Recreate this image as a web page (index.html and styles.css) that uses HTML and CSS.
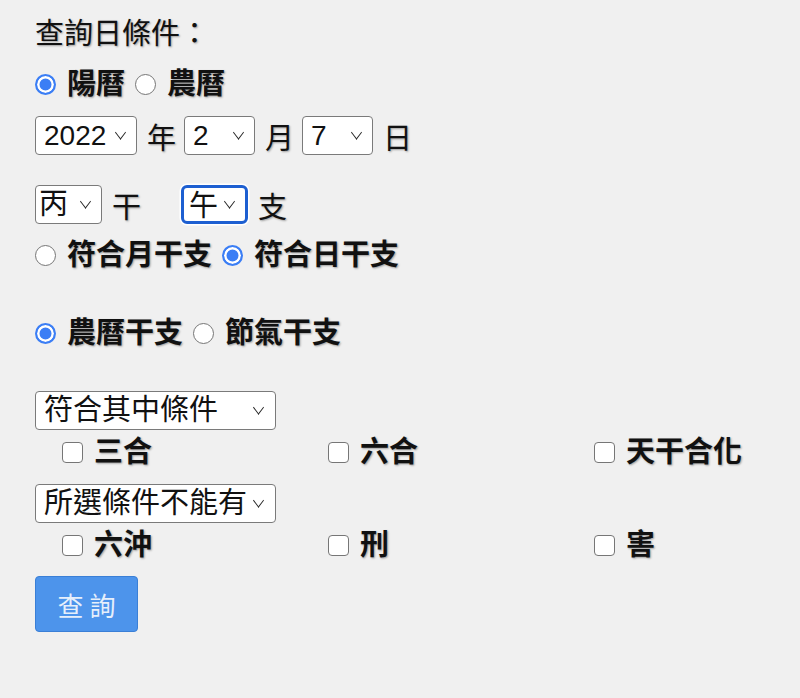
FILE: index.html
```html
<!DOCTYPE html>
<html lang="zh-Hant">

<head>
    <meta charset="UTF-8">
    <meta name="viewport" content="width=device-width, initial-scale=1.0">
    <title>查詢日</title>
    <link rel="stylesheet" href="styles.css">
</head>

<body>
    <form class="search">
        <div class="title">查詢日條件：</div>

        <!-- 曆法 -->
        <div class="row choice first">
            <label class="opt"><input type="radio" name="cal" checked>陽曆</label>
            <label class="opt"><input type="radio" name="cal">農曆</label>
        </div>

        <!-- 年月日 -->
        <div class="row date">
            <span class="sel w-year"><select><option>2022</option></select></span>
            <span class="unit">年</span>
            <span class="sel w-md"><select><option>2</option></select></span>
            <span class="unit">月</span>
            <span class="sel w-md"><select><option>7</option></select></span>
            <span class="unit">日</span>
        </div>

        <!-- 干支 -->
        <div class="row gz">
            <span class="sel w-gz"><select><option>丙</option></select></span>
            <span class="unit">干</span>
            <span class="sel w-gz focus"><select><option>午</option></select></span>
            <span class="unit">支</span>
        </div>

        <div class="row choice match">
            <label class="opt"><input type="radio" name="match">符合月干支</label>
            <label class="opt"><input type="radio" name="match" checked>符合日干支</label>
        </div>

        <div class="row choice kind">
            <label class="opt"><input type="radio" name="kind" checked>農曆干支</label>
            <label class="opt"><input type="radio" name="kind">節氣干支</label>
        </div>

        <!-- 條件 -->
        <div class="row cond">
            <span class="sel w-cond"><select><option>符合其中條件</option></select></span>
        </div>
        <div class="checks">
            <label class="opt"><input type="checkbox">三合</label>
            <label class="opt"><input type="checkbox">六合</label>
            <label class="opt"><input type="checkbox">天干合化</label>
        </div>

        <div class="row cond second">
            <span class="sel w-cond"><select><option>所選條件不能有</option></select></span>
        </div>
        <div class="checks">
            <label class="opt"><input type="checkbox">六沖</label>
            <label class="opt"><input type="checkbox">刑</label>
            <label class="opt"><input type="checkbox">害</label>
        </div>

        <button type="button" class="go">查 詢</button>
    </form>
</body>

</html>
```

FILE: styles.css
```css
* {
    margin: 0;
    padding: 0;
    box-sizing: border-box;
}

body {
    background: #f0f0f0;
    font-family: "Liberation Sans", "Noto Sans CJK TC", sans-serif;
    font-size: 29px;
    color: #111;
    text-shadow: 1px 1px 2px rgba(0, 0, 0, 0.35);
}

.search {
    padding: 16px 0 0 35px;
}

.title {
    line-height: 36px;
    height: 36px;
}

.row {
    display: flex;
    align-items: center;
}

.choice {
    height: 36px;
    gap: 10px;
}

.first {
    margin-top: 14px;
}

.match {
    margin-top: 13px;
}

.kind {
    margin-top: 42px;
}

.opt {
    display: inline-flex;
    align-items: center;
    gap: 11px;
    font-weight: bold;
    line-height: 32px;
}

input[type="radio"] {
    appearance: none;
    width: 21px;
    height: 21px;
    border: 1px solid #767676;
    border-radius: 50%;
    background: #fff;
    flex: none;
}

input[type="radio"]:checked {
    border: 2px solid #3b7ef5;
    background: #3b7ef5;
    box-shadow: inset 0 0 0 2.5px #fff;
}

input[type="checkbox"] {
    appearance: none;
    width: 21px;
    height: 21px;
    border: 1px solid #767676;
    border-radius: 4px;
    background: #fff;
    flex: none;
}

.date {
    margin-top: 14px;
    height: 39px;
}

.gz {
    margin-top: 30px;
    height: 39px;
}

.unit {
    margin: 0 8px 0 10px;
}

.gz .unit:nth-of-type(2) {
    margin-right: 40px;
}

.sel {
    position: relative;
    display: inline-block;
    height: 39px;
}

.sel::after {
    content: "";
    position: absolute;
    right: 12px;
    top: 12px;
    width: 8px;
    height: 8px;
    border-right: 1px solid #222;
    border-bottom: 1px solid #222;
    transform: rotate(45deg) skew(8deg, 8deg);
    pointer-events: none;
}

select {
    appearance: none;
    width: 100%;
    height: 39px;
    border: 1px solid #7a7a7a;
    border-radius: 4px;
    background: #fff;
    color: #111;
    font: inherit;
    line-height: 37px;
    padding: 0 20px 0 8px;
    text-shadow: none;
}

.w-year {
    width: 102px;
}

.w-year select,
.w-md select {
    font-size: 28px;
}

.w-md {
    width: 71px;
}

.w-gz {
    width: 67px;
}

.w-gz select {
    padding-left: 3px;
}

.focus select {
    border: 3px solid #1d5fd1;
    border-radius: 6px;
    box-shadow: 0 0 0 1.5px #fff;
    padding-left: 5px;
}

.focus::after {
    right: 14px;
}

.w-cond {
    width: 241px;
}

.w-cond::after {
    right: 13px;
}

.cond {
    margin-top: 40px;
}

.cond.second {
    margin-top: 16px;
}

.checks {
    display: grid;
    grid-template-columns: 266px 266px 1fr;
    padding-left: 27px;
    height: 32px;
    margin-top: 6px;
    align-items: center;
}

.go {
    margin-top: 15px;
    width: 103px;
    height: 56px;
    background: #4d94eb;
    border: 1px solid #3a7fd6;
    border-radius: 4px;
    color: #e6effb;
    font-family: "Noto Sans CJK TC", sans-serif;
    font-size: 26px;
    text-shadow: none;
}
```
